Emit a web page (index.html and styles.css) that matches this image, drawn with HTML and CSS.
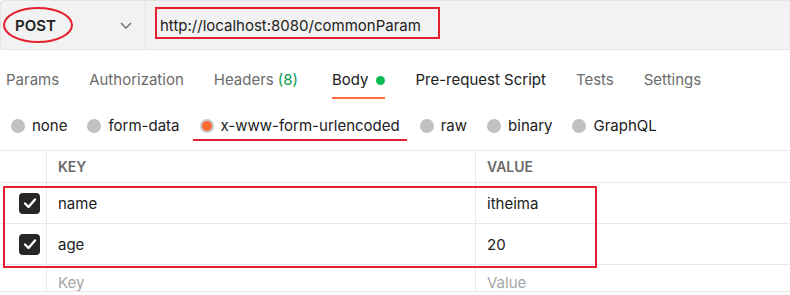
FILE: index.html
```html
<!DOCTYPE html>
<html lang="en">

<head>
    <meta charset="UTF-8">
    <meta name="viewport" content="width=device-width, initial-scale=1.0">
    <title>commonParam</title>
    <link rel="stylesheet" href="styles.css">
</head>

<body>
    <div class="request-bar">
        <div class="method">
            <span class="method-name">POST</span>
            <svg class="chevron" width="12" height="7" viewBox="0 0 12 7">
                <polyline points="1,1 6,6 11,1" fill="none" stroke="#6b6b6b" stroke-width="1.4" />
            </svg>
            <span class="mark-ellipse"></span>
        </div>
        <div class="url">
            <span class="url-text">http://localhost:8080/commonParam</span>
            <span class="mark-box"></span>
        </div>
    </div>

    <div class="tabs">
        <a class="tab">Params</a>
        <a class="tab">Authorization</a>
        <a class="tab">Headers <span class="count">(8)</span></a>
        <a class="tab active">Body <span class="dot"></span></a>
        <a class="tab strong">Pre-request Script</a>
        <a class="tab">Tests</a>
        <a class="tab">Settings</a>
    </div>

    <div class="body-types">
        <label class="opt"><span class="radio"></span>none</label>
        <label class="opt"><span class="radio"></span>form-data</label>
        <label class="opt selected"><span class="radio"></span>x-www-form-urlencoded</label>
        <label class="opt"><span class="radio"></span>raw</label>
        <label class="opt"><span class="radio"></span>binary</label>
        <label class="opt"><span class="radio"></span>GraphQL</label>
    </div>

    <div class="kv">
        <div class="kv-row kv-head">
            <div class="cell check"></div>
            <div class="cell">KEY</div>
            <div class="cell">VALUE</div>
        </div>
        <div class="kv-row">
            <div class="cell check"><span class="checkbox"><svg width="14" height="12" viewBox="0 0 14 12"><polyline points="2,6.5 5.5,10 12,2.5" fill="none" stroke="#fff" stroke-width="2.4" stroke-linecap="round" stroke-linejoin="round" /></svg></span></div>
            <div class="cell">name</div>
            <div class="cell">itheima</div>
        </div>
        <div class="kv-row">
            <div class="cell check"><span class="checkbox"><svg width="14" height="12" viewBox="0 0 14 12"><polyline points="2,6.5 5.5,10 12,2.5" fill="none" stroke="#fff" stroke-width="2.4" stroke-linecap="round" stroke-linejoin="round" /></svg></span></div>
            <div class="cell">age</div>
            <div class="cell">20</div>
        </div>
        <div class="kv-row kv-new">
            <div class="cell check"></div>
            <div class="cell placeholder">Key</div>
            <div class="cell placeholder">Value</div>
        </div>
        <span class="mark-rows"></span>
    </div>
</body>

</html>
```

FILE: styles.css
```css
body {
    margin: 0;
    font-family: Inter, "Noto Sans", sans-serif;
    font-size: 14px;
    color: #212121;
    background: #fff;
    width: 790px;
    overflow: hidden;
}

/* top request bar */
.request-bar {
    display: flex;
    height: 48px;
    background: #f2f2f2;
    border-top: 1px solid #e4e4e4;
    border-bottom: 1px solid #e4e4e4;
    border-left: 1px solid #e4e4e4;
    border-radius: 4px 0 0 4px;
    width: 820px;
}

.method {
    position: relative;
    display: flex;
    align-items: center;
    width: 144px;
    border-right: 1px solid #e4e4e4;
}

.method-name {
    margin-left: 14px;
    font-size: 15px;
    font-weight: 600;
}

.chevron {
    margin-left: auto;
    margin-right: 13px;
}

.mark-ellipse {
    position: absolute;
    left: 2px;
    top: 6px;
    width: 66px;
    height: 32px;
    border: 2px solid #e5202e;
    border-radius: 50%;
}

.url {
    position: relative;
    display: flex;
    align-items: center;
    padding-left: 14px;
    font-size: 15px;
}

.mark-box {
    position: absolute;
    left: 9px;
    top: 6px;
    width: 281px;
    height: 28px;
    border: 2px solid #e5202e;
}

/* tabs */
.tabs {
    display: flex;
    gap: 30px;
    padding-left: 6px;
}

.tab {
    padding: 20px 0 7px;
    line-height: 20px;
    font-size: 15px;
    color: #6b6b6b;
    border-bottom: 2px solid transparent;
    display: flex;
    align-items: center;
}

.tab .count {
    color: #0a9a50;
    margin-left: 4px;
}

.tab.active {
    color: #212121;
    border-bottom-color: #ff6c37;
    margin-left: 4px;
}

.tab.strong {
    color: #212121;
}

.dot {
    display: inline-block;
    width: 9px;
    height: 9px;
    border-radius: 50%;
    background: #0cbb52;
    margin-left: 8px;
}

/* body type radios */
.body-types {
    display: flex;
    gap: 20px;
    padding: 17px 0 0 11px;
}

.opt {
    position: relative;
    display: flex;
    align-items: center;
    gap: 7px;
    font-size: 15px;
    line-height: 20px;
    padding-bottom: 5px;
}

.radio {
    width: 14px;
    height: 14px;
    border-radius: 50%;
    background: #c0c0c0;
    box-sizing: border-box;
}

.selected .radio {
    background: #ff6c37;
    border: 2px solid #c9c9c9;
}

.selected::after {
    content: "";
    position: absolute;
    left: -7px;
    right: -7px;
    bottom: 0;
    height: 2px;
    background: #e5202e;
}

/* key / value table */
.kv {
    position: relative;
    margin-top: 9px;
    border-top: 1px solid #e8e8e8;
}

.kv-row {
    display: grid;
    grid-template-columns: 46px 429px 1fr;
    height: 40px;
    border-bottom: 1px solid #e8e8e8;
}

.kv-head {
    height: 31px;
    font-weight: 600;
    color: #6b6b6b;
}

.kv-new {
    height: 26px;
    align-items: start;
}

.cell {
    display: flex;
    align-items: center;
    padding-left: 11px;
    border-left: 1px solid #e8e8e8;
    font-size: 15px;
}

.kv-head .cell {
    font-size: 14px;
}

.cell.check {
    border-left: none;
    padding-left: 19px;
}

.placeholder {
    color: #a6a6a6;
    padding-top: 9px;
    line-height: 20px;
    height: 17px;
}

.checkbox {
    display: flex;
    align-items: center;
    justify-content: center;
    width: 21px;
    height: 21px;
    border-radius: 4px;
    background: #262626;
}

.mark-rows {
    position: absolute;
    left: 3px;
    top: 35px;
    width: 590px;
    height: 78px;
    border: 2px solid #e5202e;
}
```
